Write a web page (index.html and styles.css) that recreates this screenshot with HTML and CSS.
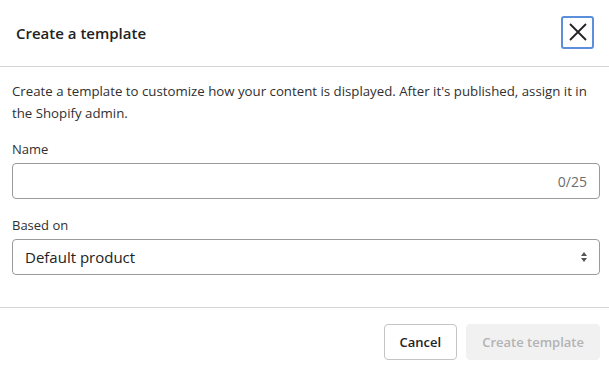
FILE: index.html
```html
<!DOCTYPE html>
<html lang="en">
<head>
  <meta charset="UTF-8">
  <title>Create a template</title>
  <link rel="stylesheet" href="styles.css">
</head>
<body>

  <div class="modal">
    <div class="modal-header">
      <h2>Create a template</h2>
      <button class="close-btn" aria-label="Close">
        <svg width="20" height="20" viewBox="0 0 20 20">
          <path d="M2 2 L18 18 M18 2 L2 18" stroke="#222" stroke-width="1.8" fill="none"/>
        </svg>
      </button>
    </div>

    <div class="modal-body">
      <p>Create a template to customize how your content is displayed. After it's published, assign it in the Shopify admin.</p>

      <label class="field-label">Name</label>
      <div class="text-field">
        <span class="counter">0/25</span>
      </div>

      <label class="field-label spaced">Based on</label>
      <div class="select-field">
        <span>Default product</span>
        <svg width="8" height="12" viewBox="0 0 8 12">
          <path d="M4 1 L7 5 L1 5 Z M4 11 L7 7 L1 7 Z" fill="#555"/>
        </svg>
      </div>
    </div>

    <div class="modal-footer">
      <button class="btn">Cancel</button>
      <button class="btn btn-disabled">Create template</button>
    </div>
  </div>

</body>
</html>
```

FILE: styles.css
```css
body {
  font-family: 'Open Sans', sans-serif;
  background-color: #fff;
  color: #303030;
  margin: 0;
  padding: 0;
}
.modal {
  width: 609px;
}
.modal-header {
  height: 67px;
  display: flex;
  align-items: center;
  justify-content: space-between;
  padding: 0 15px 0 16px;
  border-bottom: 1px solid #d4d4d4;
  box-sizing: border-box;
}
.modal-header h2 {
  font-size: 15px;
  font-weight: 600;
  margin: 0;
  color: #222;
}
.close-btn {
  width: 33px;
  height: 33px;
  border: 2px solid #5b8fd9;
  border-radius: 3px;
  background: #fff;
  padding: 0;
  display: flex;
  align-items: center;
  justify-content: center;
  margin-top: -2px;
}
.modal-body {
  padding: 13px 9px 32px 12px;
  border-bottom: 1px solid #d4d4d4;
}
.modal-body p {
  font-size: 13.25px;
  line-height: 22px;
  margin: 0 0 15px 0;
}
.field-label {
  display: block;
  font-size: 13px;
  line-height: 20px;
  margin-bottom: 4px;
}
.spaced {
  margin-top: 16px;
}
.text-field,
.select-field {
  height: 36px;
  border: 1px solid #9b9b9b;
  border-radius: 4px;
  box-sizing: border-box;
  display: flex;
  align-items: center;
  padding: 0 12px;
}
.text-field {
  justify-content: flex-end;
}
.counter {
  font-size: 14px;
  color: #6d6d6d;
}
.select-field {
  justify-content: space-between;
  font-size: 15px;
  color: #222;
  padding-right: 11px;
}
.modal-footer {
  display: flex;
  justify-content: flex-end;
  gap: 9px;
  padding: 16px 9px 0 0;
}
.btn {
  font-family: 'Open Sans', sans-serif;
  font-size: 13px;
  font-weight: 600;
  height: 36px;
  padding: 0 15px;
  border: 1px solid #c4c4c4;
  border-radius: 4px;
  background: #fff;
  color: #222;
  cursor: pointer;
}
.btn-disabled {
  background: #f1f1f1;
  border-color: #f1f1f1;
  color: #b3b3b3;
  cursor: default;
}
```
